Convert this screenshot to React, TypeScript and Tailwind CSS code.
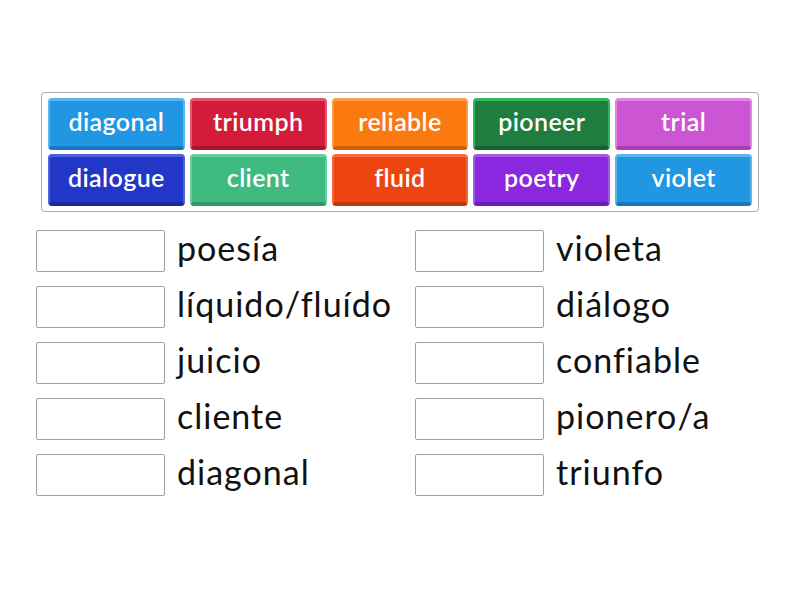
const TILES = [
  { word: 'diagonal', cls: 'bg-[#2196e3] border-[#5ab4ee] border-b-[#1778c0]' },
  { word: 'triumph', cls: 'bg-[#d41c3a] border-[#e2566b] border-b-[#a8142c]' },
  { word: 'reliable', cls: 'bg-[#fb7a10] border-[#fd9a4a] border-b-[#d0600a]' },
  { word: 'pioneer', cls: 'bg-[#1f7d40] border-[#2cbb5c] border-b-[#17602f]' },
  { word: 'trial', cls: 'bg-[#cc55d4] border-[#de86e2] border-b-[#a93db2]' },
  { word: 'dialogue', cls: 'bg-[#2236c8] border-[#4d5fda] border-b-[#1a29a0]' },
  { word: 'client', cls: 'bg-[#3fba80] border-[#6bcd9d] border-b-[#2f9866]' },
  { word: 'fluid', cls: 'bg-[#ee4510] border-[#f46c3e] border-b-[#c3360a]' },
  { word: 'poetry', cls: 'bg-[#8a28e0] border-[#a45ae9] border-b-[#6c1cb6]' },
  { word: 'violet', cls: 'bg-[#2196e3] border-[#5ab4ee] border-b-[#1778c0]' },
]

const LEFT = ['poesía', 'líquido/fluído', 'juicio', 'cliente', 'diagonal']
const RIGHT = ['violeta', 'diálogo', 'confiable', 'pionero/a', 'triunfo']

function AnswerColumn({ words }: { words: string[] }) {
  return (
    <div className="flex flex-col gap-[14px]">
      {words.map((w) => (
        <div key={w} className="flex items-center h-[42px]">
          <div className="w-[129px] h-[42px] shrink-0 border border-[#a0a0a0] rounded-[2px] bg-white" />
          <span className="ml-[12px] text-[34px] leading-none tracking-[1px] text-[#111] pb-[6px]">{w}</span>
        </div>
      ))}
    </div>
  )
}

export default function App() {
  return (
    <div
      className="w-[800px] h-[600px] bg-white overflow-hidden"
      style={{ fontFamily: 'Lato, "Open Sans", sans-serif' }}
    >
      {/* word bank */}
      <div className="ml-[41px] mt-[92px] w-[718px] h-[120px] border border-[#aaaaaa] rounded-[4px] px-[6px] pt-[5px]">
        <div className="grid grid-cols-5 gap-x-[5px] gap-y-[4px]">
          {TILES.map((t) => (
            <div
              key={t.word}
              className={`h-[52px] rounded-[4px] border-2 border-t-[3px] border-b-[4px] flex items-center justify-center text-white text-[25px] tracking-[0.4px] font-semibold pb-[4px] ${t.cls}`}
            >
              {t.word}
            </div>
          ))}
        </div>
      </div>

      {/* answers */}
      <div className="ml-[36px] mt-[18px] grid grid-cols-[379px_379px]">
        <AnswerColumn words={LEFT} />
        <AnswerColumn words={RIGHT} />
      </div>
    </div>
  )
}
